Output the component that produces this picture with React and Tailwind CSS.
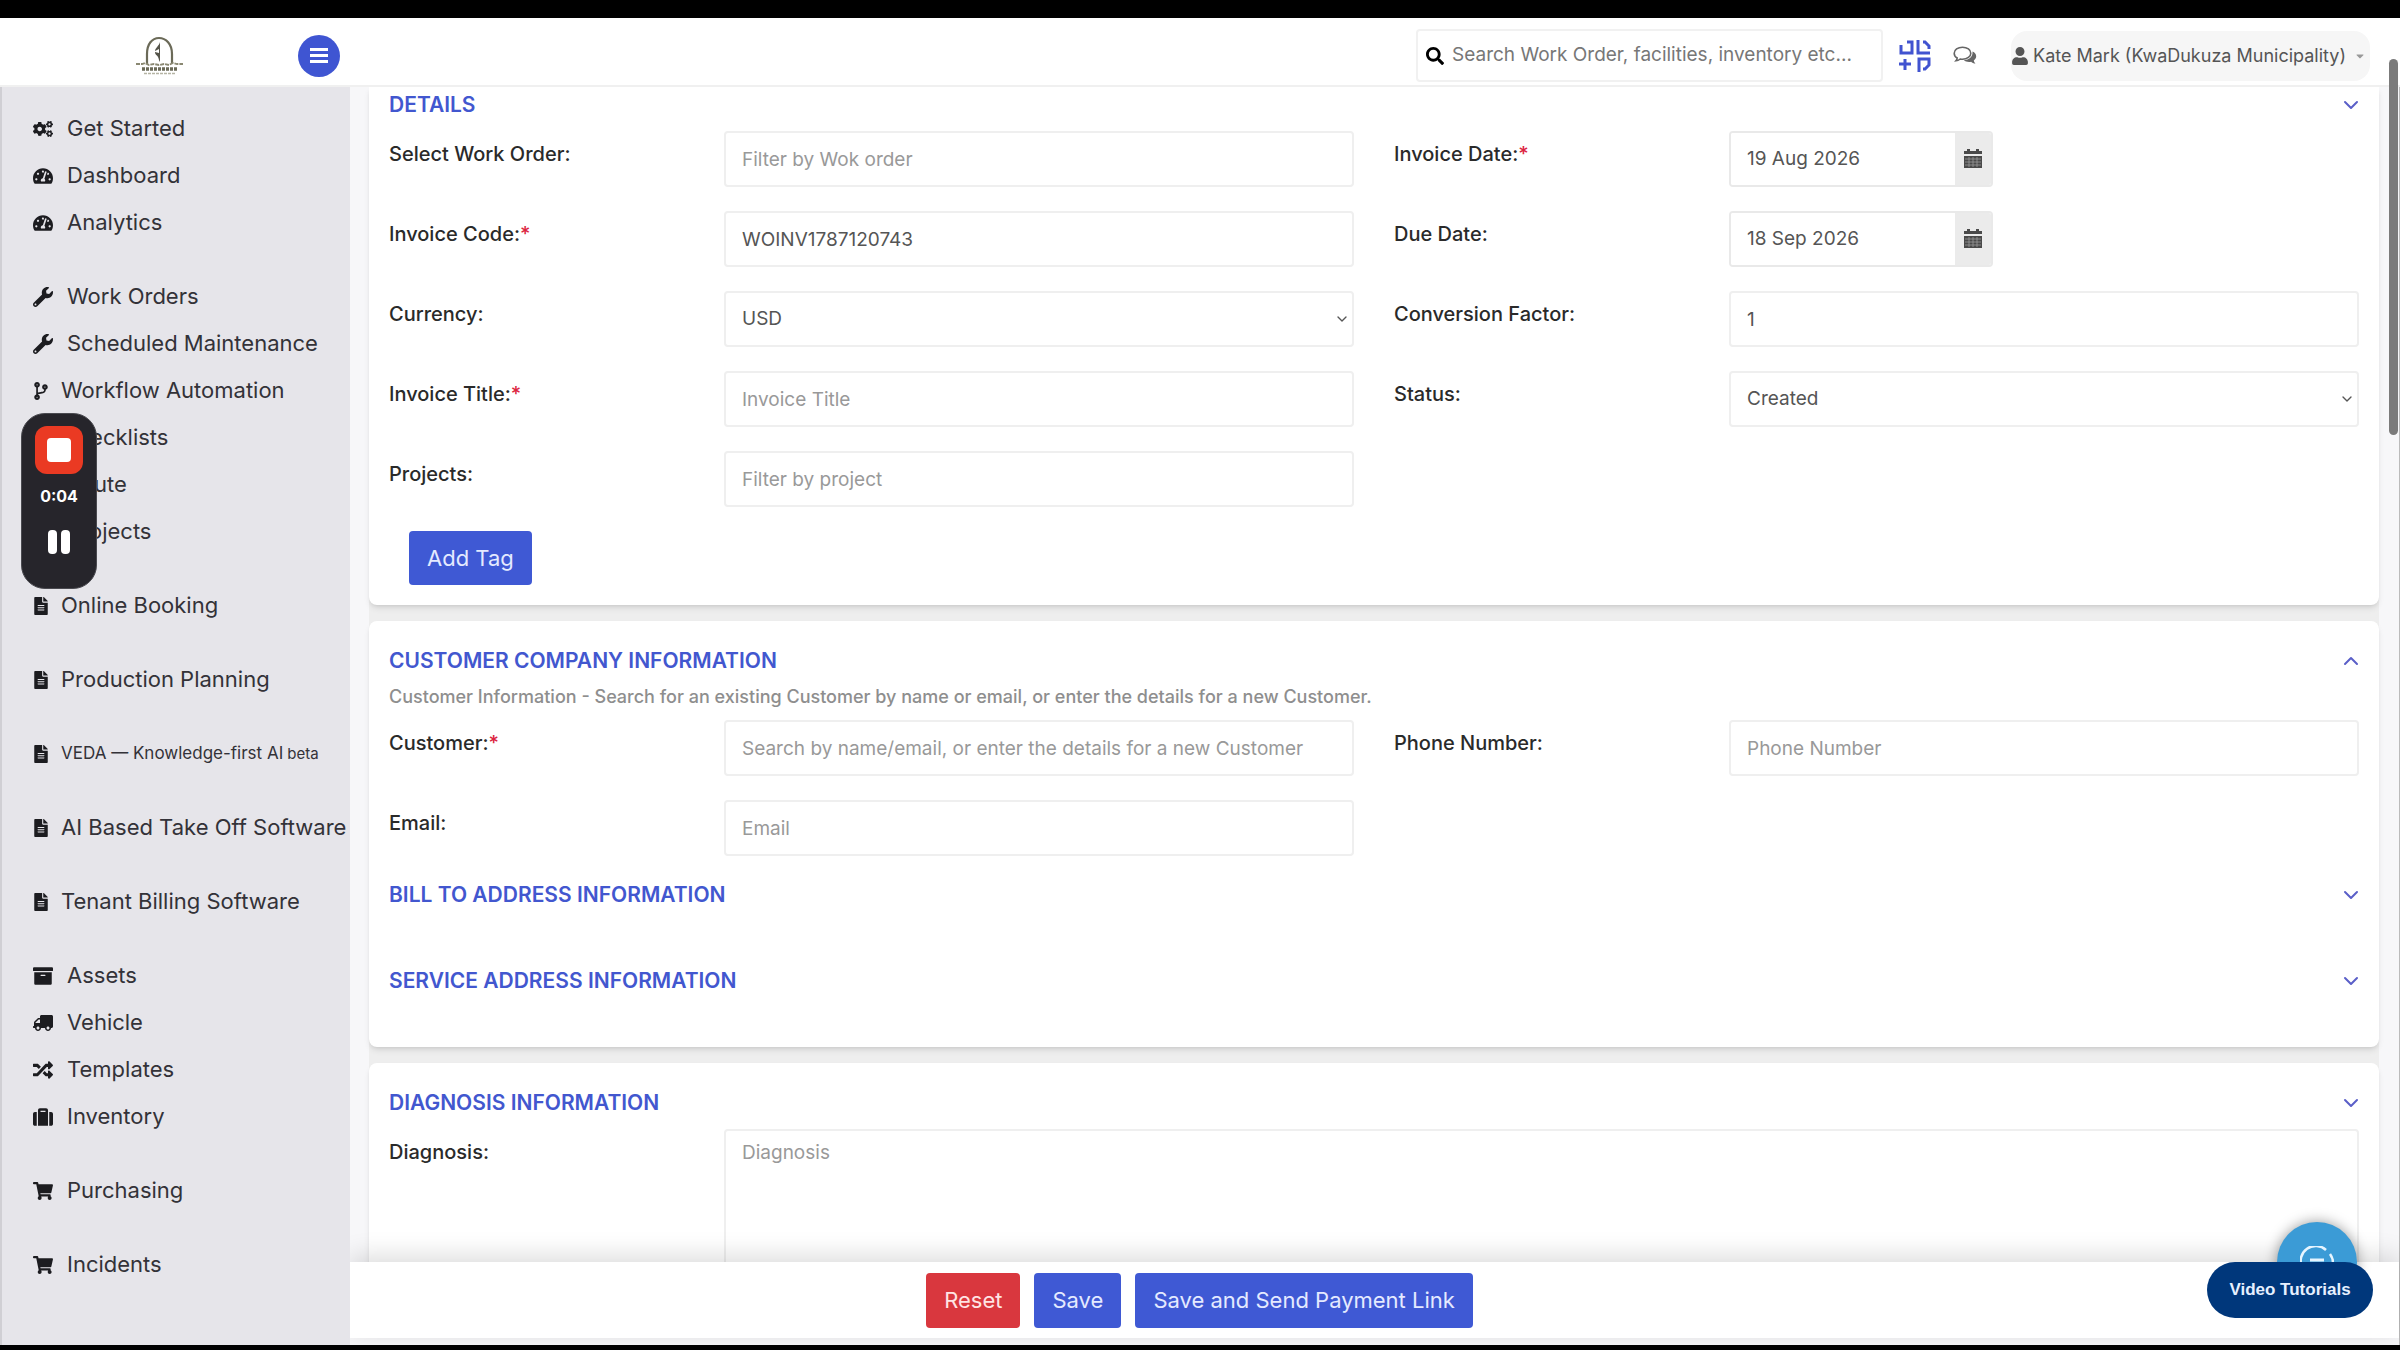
import { useState } from 'react'
import {
  FaArchive, FaCaretDown, FaCodeBranch, FaCogs, FaFileAlt, FaRandom, FaSearch,
  FaShoppingCart, FaSuitcase, FaTachometerAlt, FaTruck, FaUser, FaWrench,
} from 'react-icons/fa'
import { ChevronDown, ChevronUp } from 'lucide-react'

const navGroups = [
  [
    { label: 'Get Started', icon: FaCogs },
    { label: 'Dashboard', icon: FaTachometerAlt },
    { label: 'Analytics', icon: FaTachometerAlt },
  ],
  [
    { label: 'Work Orders', icon: FaWrench },
    { label: 'Scheduled Maintenance', icon: FaWrench },
    { label: 'Workflow Automation', icon: FaCodeBranch, narrow: true },
    { label: 'Checklists', icon: FaFileAlt, narrow: true },
    { label: 'Route', icon: FaFileAlt },
    { label: 'Projects', icon: FaFileAlt },
  ],
  [{ label: 'Online Booking', icon: FaFileAlt, narrow: true }],
  [{ label: 'Production Planning', icon: FaFileAlt, narrow: true }],
  [{ label: 'VEDA — Knowledge-first AI', icon: FaFileAlt, narrow: true, small: true, tag: 'beta' }],
  [{ label: 'AI Based Take Off Software', icon: FaFileAlt, narrow: true }],
  [{ label: 'Tenant Billing Software', icon: FaFileAlt, narrow: true }],
  [
    { label: 'Assets', icon: FaArchive },
    { label: 'Vehicle', icon: FaTruck, flip: true },
    { label: 'Templates', icon: FaRandom },
    { label: 'Inventory', icon: FaSuitcase },
  ],
  [{ label: 'Purchasing', icon: FaShoppingCart }],
  [{ label: 'Incidents', icon: FaShoppingCart }],
]

const controlClass =
  'w-full h-14 px-4 rounded border-2 border-[#efefef] bg-white text-[19px] text-[#555] placeholder:text-[#999] outline-none'

function Logo() {
  return (
    <svg viewBox="0 0 48 40" className="w-12 h-10" fill="none" aria-hidden="true">
      <path d="M11 28V18C11 8 16 2 23 2s13 6 13 16v10" stroke="#6b6a58" strokeWidth="2.2" />
      <path d="M24 6c-1 4-5 6-5 9l4-2v4l-4-1c0 3 2 3 3 5s1 4 2 5V6z" fill="#55544a" />
      <path d="M0 28h6l3-1 4 2 5-1 5 1 5-1 5 1 4-2 4 1h6" stroke="#8a8872" strokeWidth="1.8" strokeDasharray="4 1" />
      <path d="M6 33h35" stroke="#6b6a58" strokeWidth="3.500" strokeDasharray="3 1" />
      <path d="M8 37.500h32" stroke="#b5b4a4" strokeWidth="1.500" strokeDasharray="3 1" />
    </svg>
  )
}

function QrIcon() {
  return (
    <svg viewBox="0 0 32 32" className="w-8 h-8" fill="none" stroke="#4153d0" strokeWidth="3" aria-hidden="true">
      <path d="M2 5v8h11V2H8" />
      <path d="M19 0v13h12M24 2h2l4 4v3" />
      <path d="M6 19v11M0 24h12" />
      <path d="M20 32V19h10v6l-4 4h-2" />
    </svg>
  )
}

function ChatIcon() {
  return (
    <svg viewBox="0 0 24 20" className="w-6 h-5" aria-hidden="true">
      <path d="M19.500 5.500c2.300 1 3.700 2.600 3.700 4.700 0 1.700-.9 3.100-2.400 4.200.2 1.400.9 2.300 1.800 3.200-2 0-3.400-.8-4.500-1.800-3 .5-5.500-.1-7.300-1.500 5.200-.2 9.300-3.600 8.700-8.800z" fill="#666" />
      <path d="M9.500 1.200c4.700 0 8.300 2.600 8.300 6s-3.600 6-8.300 6c-.8 0-1.600-.1-2.300-.2-1.200 1-2.700 1.700-4.300 1.800.7-.8 1.200-1.700 1.300-2.800C2.300 10.900 1.200 9.200 1.200 7.200c0-3.400 3.600-6 8.300-6z" fill="#fff" stroke="#666" strokeWidth="1.600" />
    </svg>
  )
}

function CalendarIcon() {
  return (
    <svg viewBox="0 0 18 20" className="w-[18px] h-5" aria-hidden="true">
      <path d="M0 2h3V0h3v2h6V0h3v2h3v3H0z" fill="#4a4a4a" />
      <path d="M0 7h18v12H0z" fill="#4a4a4a" />
      <path d="M1 10h16M1 13h16M1 16h16M5 8v10M9 8v10M13 8v10" stroke="#999" strokeWidth="0.800" />
    </svg>
  )
}

function NavItem({ item }) {
  const Icon = item.icon
  return (
    <a href="#" className="flex items-center h-[47px] whitespace-nowrap text-[22px] text-[#333238]">
      <span className={`flex shrink-0 ${item.narrow ? 'w-7' : 'w-[34px]'}`}>
        <Icon
          className={`text-[#1c1c20] ${item.narrow ? 'w-4 h-[18px]' : 'w-5 h-5'} ${item.flip ? '-scale-x-100' : ''}`}
        />
      </span>
      <span className={item.small ? 'text-[17px]' : ''}>
        {item.label}
        {item.tag && <small className="ml-1 text-[15px]">{item.tag}</small>}
      </span>
    </a>
  )
}

function Field({ id, label, required, wide, children }) {
  return (
    <div className={`flex ${wide ? 'col-span-2' : ''}`}>
      <label
        htmlFor={id}
        className={`shrink-0 px-5 pt-2 text-[20px] leading-[30px] font-medium text-[#2a2a2a] ${wide ? 'w-1/6' : 'w-1/3'}`}
      >
        {label}:{required && <span className="text-[#dc2440]">*</span>}
      </label>
      <div className="flex-1 min-w-0 px-5">{children}</div>
    </div>
  )
}

function TextField({ id, label, required, placeholder, value }) {
  return (
    <Field id={id} label={label} required={required}>
      <input id={id} type="text" placeholder={placeholder} defaultValue={value} className={controlClass} />
    </Field>
  )
}

function DateField({ id, label, required, value }) {
  return (
    <Field id={id} label={label} required={required}>
      <div className="flex w-[264px] h-14 rounded border-2 border-[#e9e9e9] overflow-hidden">
        <input
          id={id}
          type="text"
          defaultValue={value}
          className="flex-1 min-w-0 px-4 bg-white text-[19px] text-[#555] outline-none"
        />
        <button type="button" aria-label={`Pick ${label}`} className="flex items-center justify-center w-9 bg-[#ebebeb]">
          <CalendarIcon />
        </button>
      </div>
    </Field>
  )
}

function SelectField({ id, label, options }) {
  return (
    <Field id={id} label={label}>
      <div className="relative">
        <select id={id} className={`${controlClass} appearance-none`}>
          {options.map((o) => <option key={o}>{o}</option>)}
        </select>
        <ChevronDown className="absolute right-1 top-5 w-4 h-4 text-[#555] pointer-events-none" />
      </div>
    </Field>
  )
}

function SectionHeading({ title, open }) {
  const Icon = open ? ChevronUp : ChevronDown
  return (
    <div className="flex items-center justify-between px-5">
      <h2 className="text-[21px] leading-[30px] font-semibold text-[#4257cf]">{title}</h2>
      <button type="button" aria-label={`Toggle ${title}`} className="-mr-1">
        <Icon className="w-6 h-6 text-[#5a5fc8]" />
      </button>
    </div>
  )
}

function Recorder() {
  return (
    <div className="absolute left-[21px] top-[413px] z-30 flex flex-col items-center w-[76px] h-[176px] pt-3
                    rounded-[24px] bg-[#26252b] border border-[#4a4a50]">
      <button type="button" aria-label="Stop" className="flex items-center justify-center w-12 h-12 rounded-xl bg-[#ea3a23]">
        <span className="w-6 h-6 rounded-sm bg-white" />
      </button>
      <span className="mt-2 text-[16px] leading-7 font-bold text-white">0:04</span>
      <button type="button" aria-label="Pause" className="flex gap-1 mt-5">
        <span className="w-[9px] h-6 rounded-sm bg-white" />
        <span className="w-[9px] h-6 rounded-sm bg-white" />
      </button>
    </div>
  )
}

export default function App() {
  const [query, setQuery] = useState('')

  return (
    <div className="relative flex flex-col h-screen pt-[18px] pb-[5px] bg-black overflow-hidden font-['Inter',sans-serif]">
      {/* Top bar */}
      <header className="relative z-10 flex items-center shrink-0 h-[69px] pt-2 pr-[30px] bg-white border-b-2 border-[#f0f0f0]">
        <div className="flex items-center justify-between w-[340px] pl-[136px]">
          <Logo />
          <button type="button" aria-label="Menu" className="flex flex-col items-center justify-center gap-[3px] w-[42px] h-[42px] rounded-full bg-[#3f55d2]">
            <span className="w-[18px] h-[3px] bg-white" />
            <span className="w-[18px] h-[3px] bg-white" />
            <span className="w-[18px] h-[3px] bg-white" />
          </button>
        </div>

        <div className="flex items-center ml-auto">
          <label className="flex items-center gap-2 w-[467px] h-[53px] px-2 rounded border-2 border-[#f1f1f1]">
            <FaSearch className="shrink-0 w-[18px] h-[18px] text-black" />
            <input
              type="text"
              aria-label="Search"
              value={query}
              onChange={(e) => setQuery(e.target.value)}
              placeholder="Search Work Order, facilities, inventory etc..."
              className="flex-1 min-w-0 text-[19px] text-[#555] placeholder:text-[#777] outline-none"
            />
          </label>
          <button type="button" aria-label="Scan code" className="ml-4"><QrIcon /></button>
          <button type="button" aria-label="Messages" className="ml-[22px]"><ChatIcon /></button>
          <button type="button" className="flex items-center gap-1 ml-[34px] h-[50px] pr-1 rounded-2xl bg-[#f6f6f6] text-[18px] text-[#555]">
            <FaUser className="w-[18px] h-[18px]" />
            Kate Mark (KwaDukuza Municipality)
            <FaCaretDown className="ml-1 w-3 h-3 text-[#999]" />
          </button>
        </div>
      </header>

      <div className="flex flex-1 min-h-0">
        {/* Sidebar */}
        <nav className="relative z-10 flex flex-col gap-[27px] shrink-0 w-[350px] pt-[18px] pl-[31px] bg-[#e6e5ea] border-l-2 border-[#d0cfd4] overflow-hidden">
          {navGroups.map((group) => (
            <div key={group[0].label}>
              {group.map((item) => <NavItem key={item.label} item={item} />)}
            </div>
          ))}
        </nav>

        <main className="relative flex flex-col flex-1 min-w-0 bg-[#f7f7f9] border-r border-[#bbb]">
          <div className="flex-1 min-h-0 pl-[19px] pr-5 overflow-hidden">
            <form className="flex flex-col gap-4 bg-[#eee]">
              {/* Details */}
              <section className="pt-[3px] pb-5 rounded-b-lg bg-white shadow-md">
                <SectionHeading title="DETAILS" />
                <div className="grid grid-cols-2 gap-y-6 mt-[11px]">
                  <TextField id="work-order" label="Select Work Order" placeholder="Filter by Wok order" />
                  <DateField id="invoice-date" label="Invoice Date" required value="19 Aug 2026" />
                  <TextField id="invoice-code" label="Invoice Code" required value="WOINV1787120743" />
                  <DateField id="due-date" label="Due Date" value="18 Sep 2026" />
                  <SelectField id="currency" label="Currency" options={['USD', 'EUR', 'ZAR']} />
                  <TextField id="factor" label="Conversion Factor" value="1" />
                  <TextField id="invoice-title" label="Invoice Title" required placeholder="Invoice Title" />
                  <SelectField id="status" label="Status" options={['Created', 'Sent', 'Paid']} />
                  <TextField id="projects" label="Projects" placeholder="Filter by project" />
                </div>
                <button type="button" className="h-[54px] mt-6 ml-10 px-[18px] rounded bg-[#3f59d4] text-[22px] text-[#e4eaff]">
                  Add Tag
                </button>
              </section>

              {/* Customer */}
              <section className="pt-[25px] pb-[51px] rounded-lg bg-white shadow-md">
                <SectionHeading title="CUSTOMER COMPANY INFORMATION" open />
                <p className="mt-[9px] px-5 text-[18px] leading-6 font-medium text-[#8e8e8e]">
                  Customer Information - Search for an existing Customer by name or email, or enter the details for a new Customer.
                </p>
                <div className="grid grid-cols-2 gap-y-6 mt-[11px]">
                  <TextField id="customer" label="Customer" required placeholder="Search by name/email, or enter the details for a new Customer" />
                  <TextField id="phone" label="Phone Number" placeholder="Phone Number" />
                  <TextField id="email" label="Email" placeholder="Email" />
                </div>
                <div className="flex flex-col gap-14 mt-6">
                  <SectionHeading title="BILL TO ADDRESS INFORMATION" />
                  <SectionHeading title="SERVICE ADDRESS INFORMATION" />
                </div>
              </section>

              {/* Diagnosis */}
              <section className="pt-[25px] pb-5 rounded-lg bg-white shadow-md">
                <SectionHeading title="DIAGNOSIS INFORMATION" />
                <div className="grid grid-cols-2 mt-[11px]">
                  <Field id="diagnosis" label="Diagnosis" wide>
                    <textarea
                      id="diagnosis"
                      placeholder="Diagnosis"
                      className="block w-full h-[180px] px-4 py-2 rounded border-2 border-[#efefef] text-[19px] text-[#555] placeholder:text-[#999] resize-none outline-none"
                    />
                  </Field>
                </div>
              </section>
            </form>
          </div>

          {/* Scrollbar thumb */}
          <div className="absolute right-px -top-7 z-20 w-[9px] h-[376px] rounded-full bg-[#7b7b7b]" />

          {/* Actions, centred on the whole window */}
          <footer className="relative flex items-center justify-center gap-[14px] shrink-0 h-[76px] mb-[7px] pr-[350px] bg-white
                             shadow-[0_-6px_24px_rgba(0,0,0,0.14)]">
            <button type="reset" className="h-[55px] px-[18px] rounded bg-[#d9373e] text-[22px] text-[#ffe4e4]">Reset</button>
            <button type="button" className="h-[55px] px-[18px] rounded bg-[#3f59d4] text-[22px] text-[#e4eaff]">Save</button>
            <button type="button" className="h-[55px] px-[18px] rounded bg-[#3f59d4] text-[22px] text-[#e4eaff]">
              Save and Send Payment Link
            </button>
          </footer>

          {/* Floating helpers */}
          <button type="button" aria-label="Chat" className="absolute right-[42px] bottom-[43px] z-10 flex items-start justify-center w-20 h-20 pt-6 rounded-full bg-[#3b9bd6] shadow-[0_0_14px_rgba(0,0,0,0.4)]">
            <svg viewBox="0 0 34 34" className="w-[34px] h-[34px]" fill="none" stroke="#e6f5ff" strokeWidth="2.500" aria-hidden="true">
              <path d="M2 21A15 15 0 0 1 26 4" />
              <path d="M30 8a15 15 0 0 1 2 14" />
              <path d="M10 14h14" strokeWidth="3" />
            </svg>
          </button>
          <button type="button" className="absolute right-[26px] bottom-[27px] z-20 w-[166px] h-14 rounded-full bg-[#00377b] text-[17px] font-bold text-[#e6f0ff] font-['Liberation_Sans',sans-serif]">
            Video Tutorials
          </button>
        </main>
      </div>

      <Recorder />
    </div>
  )
}
